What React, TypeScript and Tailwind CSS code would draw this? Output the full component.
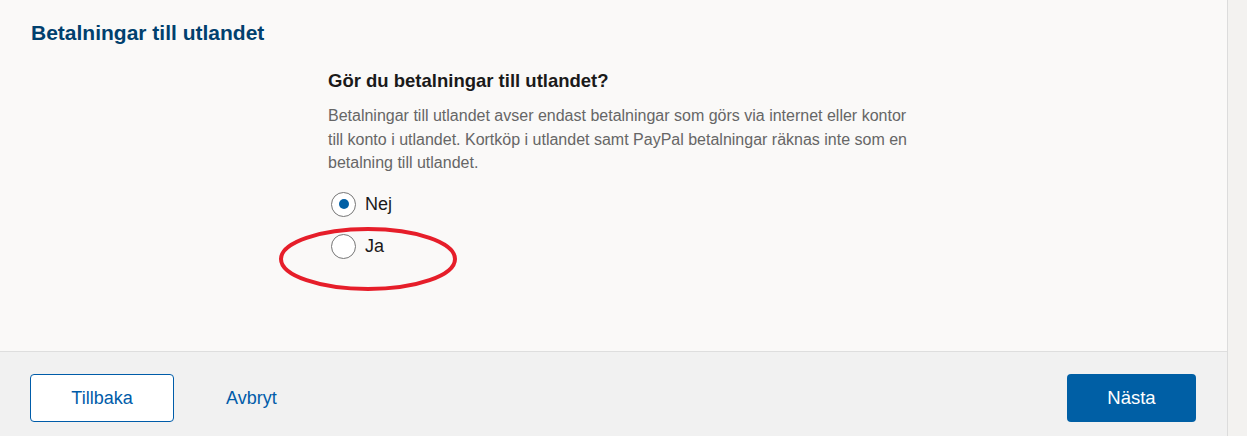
import { useState } from "react";

function Radio({ label, checked, onSelect }: { label: string; checked: boolean; onSelect: () => void }) {
  return (
    <label className="flex h-[25px] cursor-pointer items-center gap-[9px]" onClick={onSelect}>
      <span className="flex h-[25px] w-[25px] items-center justify-center rounded-full border-[1.5px] border-[#767676] bg-white">
        {checked && <span className="h-[10px] w-[10px] rounded-full bg-[#005fa5]" />}
      </span>
      <span className="text-[18px] leading-[25px] text-[#1a1a1a]">{label}</span>
    </label>
  );
}

export default function App() {
  const [answer, setAnswer] = useState("nej");

  return (
    <div className="flex h-[436px] w-full bg-[#f3f2f0] font-['Liberation_Sans',Arial,sans-serif]">
      <div className="flex w-[1228px] flex-col border-r border-[#dcdcdc]">
        <div className="h-[351px] bg-[#faf9f8] pl-[31px] pt-[21px]">
          <h2 className="text-[21px] font-bold leading-6 text-[#00406e]">Betalningar till utlandet</h2>

          <div className="relative ml-[297px] mt-[25px] w-[580px]">
            <h3 className="text-[18.5px] font-bold leading-[22px] text-[#1a1a1a]">Gör du betalningar till utlandet?</h3>
            <p className="mt-[12px] text-[16px] leading-[23.5px] text-[#666]">
              Betalningar till utlandet avser endast betalningar som görs via internet eller kontor till konto i
              utlandet. Kortköp i utlandet samt PayPal betalningar räknas inte som en betalning till utlandet.
            </p>
            <div className="mt-[17px] flex flex-col gap-[17px] pl-[3px]">
              <Radio label="Nej" checked={answer === "nej"} onSelect={() => setAnswer("nej")} />
              <Radio label="Ja" checked={answer === "ja"} onSelect={() => setAnswer("ja")} />
            </div>

            {/* red marker around "Ja" */}
            <svg className="pointer-events-none absolute left-[-50px] top-[156px]" width="182" height="66" viewBox="0 0 182 66">
              <ellipse cx="90" cy="33" rx="87" ry="30" fill="none" stroke="#e61e2a" strokeWidth="4" />
            </svg>
          </div>
        </div>

        <div className="flex flex-1 items-start border-t border-[#dedede] bg-[#f1f1f1] pl-[30px] pr-[31px] pt-[22px]">
          <button className="h-[48px] w-[144px] rounded-[4px] border border-[#005ca9] bg-white text-[18px] text-[#005ca9]">
            Tillbaka
          </button>
          <button className="ml-[52px] h-[48px] text-[18px] text-[#005ca9]">Avbryt</button>
          <button className="ml-auto h-[48px] w-[129px] rounded-[4px] bg-[#005fa5] text-[18.5px] text-white">Nästa</button>
        </div>
      </div>
    </div>
  );
}
